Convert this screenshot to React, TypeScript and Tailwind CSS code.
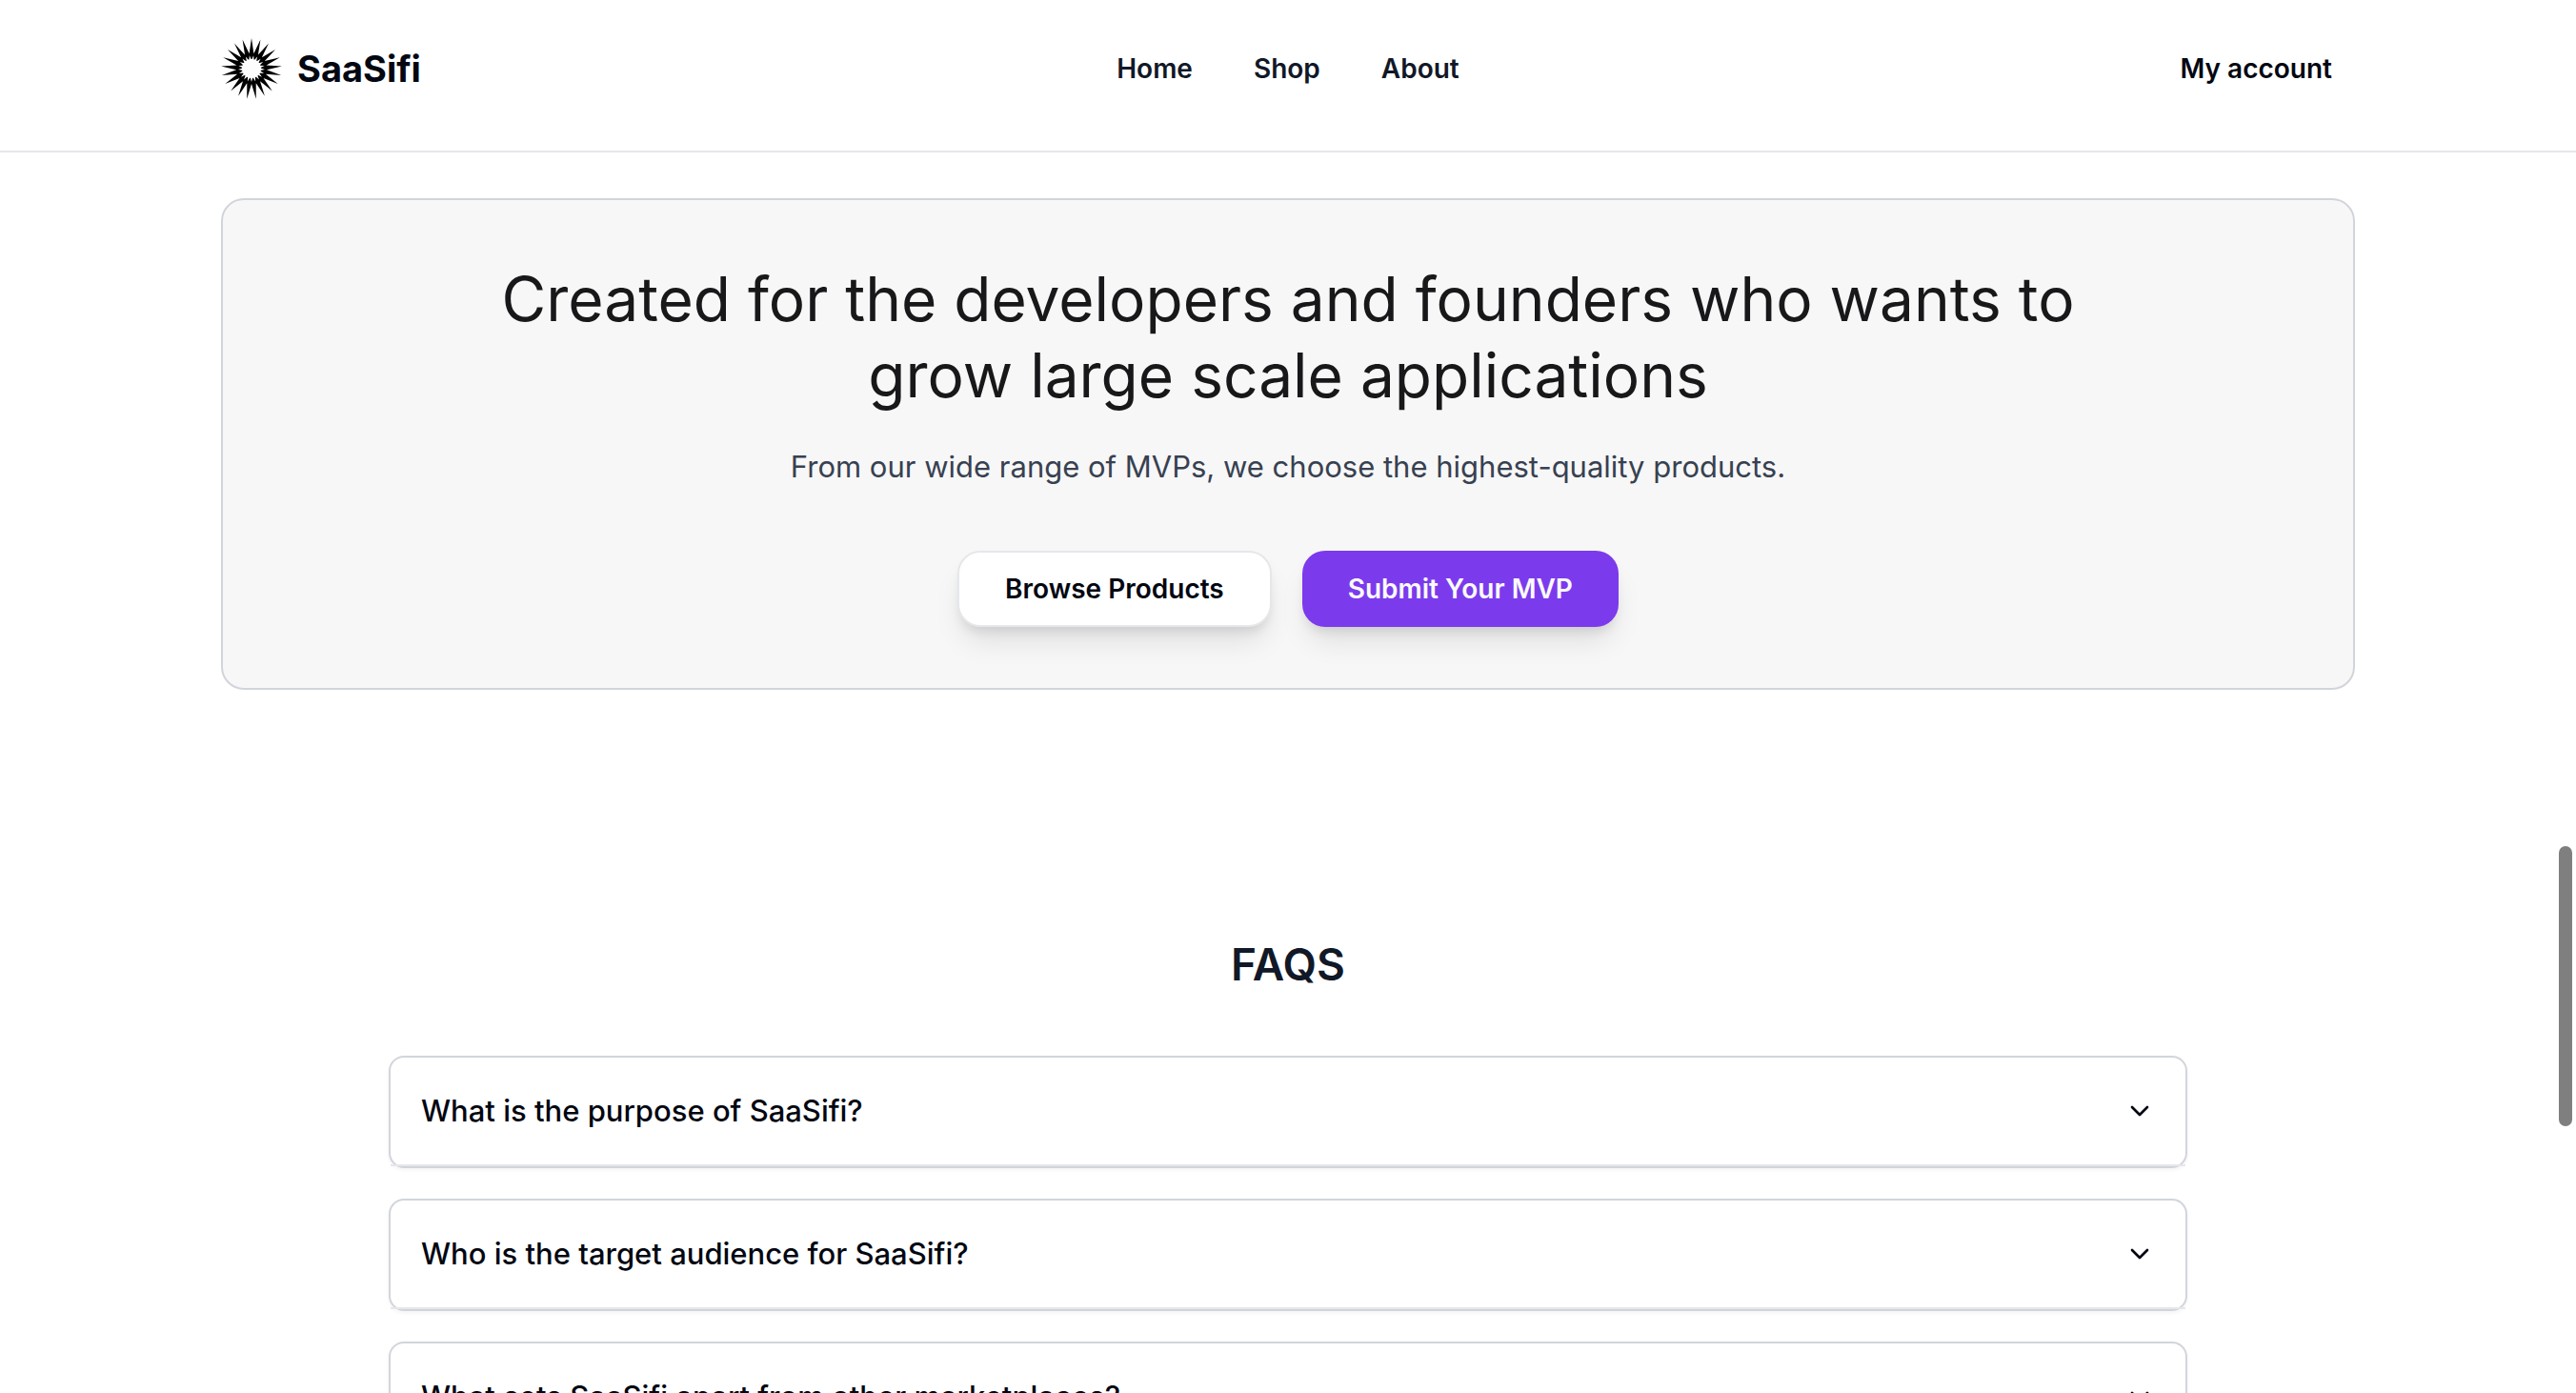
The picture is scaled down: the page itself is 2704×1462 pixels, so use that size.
import { ChevronDown } from "lucide-react";

const navLinks = [
  { label: "Home", href: "#home" },
  { label: "Shop", href: "#shop" },
  { label: "About", href: "#about" },
];

const faqs = [
  "What is the purpose of SaaSifi?",
  "Who is the target audience for SaaSifi?",
  "What sets SaaSifi apart from other marketplaces?",
];

const SPIKES = 21;

// star polygon around the middle of the 64x64 logo, first spike straight up
function star(tip: number, valley: number) {
  const points: string[] = [];
  for (let i = 0; i < SPIKES * 2; i++) {
    const angle = (i / SPIKES) * Math.PI - Math.PI / 2;
    const r = i % 2 === 0 ? tip : valley;
    points.push(
      `${(32 + r * Math.cos(angle)).toFixed(2)},${(32 + r * Math.sin(angle)).toFixed(2)}`
    );
  }
  return points.join(" ");
}

function Logo() {
  return (
    <svg viewBox="0 0 64 64" className="size-16" aria-hidden="true">
      <polygon points={star(32, 16)} fill="#000" />
      <polygon points={star(9, 14)} fill="#fff" />
      <circle cx="32" cy="32" r="10" fill="#fdfdfd" />
    </svg>
  );
}

function Header() {
  return (
    <header className="border-b-2 border-[#e5e7eb]">
      <div className="mx-auto grid max-w-[2240px] grid-cols-3 items-center pt-10 pb-[54px]">
        <a href="#home" className="flex items-center gap-4 justify-self-start">
          <Logo />
          <span className="text-[38px] leading-none font-bold">SaaSifi</span>
        </a>
        <nav className="flex gap-16 justify-self-center text-[28px] font-semibold text-[#111827]">
          {navLinks.map((link) => (
            <a key={link.label} href={link.href}>
              {link.label}
            </a>
          ))}
        </nav>
        <a href="#account" className="justify-self-end px-6 text-[28px] font-semibold">
          My account
        </a>
      </div>
    </header>
  );
}

function Hero() {
  return (
    <section className="mx-auto mt-12 max-w-[2240px] rounded-3xl border-2 border-[#d1d5db] bg-[#f7f7f7] px-16 pt-16 pb-16 text-center">
      <h1 className="mx-auto max-w-[1700px] text-[64px] leading-[80px] text-[#18181b]">
        Created for the developers and founders who wants to grow large scale applications
      </h1>
      <p className="mt-8 text-[31px] leading-[48px] text-[#374151]">
        From our wide range of MVPs, we choose the highest-quality products.
      </p>
      <div className="mt-16 flex justify-center gap-8 text-[28px] font-semibold">
        <button className="h-20 rounded-3xl border-2 border-[#e5e7eb] bg-white px-12 shadow-[0_20px_30px_-6px_rgba(0,0,0,0.1),0_8px_12px_-4px_rgba(0,0,0,0.1)]">
          Browse Products
        </button>
        <button className="h-20 rounded-3xl bg-[#7c3aed] px-12 text-[#f9fafb] shadow-[0_20px_30px_-6px_rgba(0,0,0,0.1),0_8px_12px_-4px_rgba(0,0,0,0.1)]">
          Submit Your MVP
        </button>
      </div>
    </section>
  );
}

function Faqs() {
  return (
    <section className="mx-auto mt-64 max-w-[1888px]">
      <h2 className="text-center text-[46px] leading-[64px] font-semibold text-[#111827]">
        FAQS
      </h2>
      <div className="mt-16 flex flex-col gap-8">
        {faqs.map((question) => (
          <div
            key={question}
            className="rounded-2xl border-2 border-[#d1d5db] shadow-[0_2px_4px_0_rgba(0,0,0,0.05)]"
          >
            <h3 className="border-b-2 border-[#e5e7eb]">
              <button
                aria-expanded="false"
                className="flex h-28 w-full items-center justify-between px-8 text-left text-[31px] font-medium"
              >
                {question}
                <ChevronDown className="size-8 shrink-0" aria-hidden="true" />
              </button>
            </h3>
          </div>
        ))}
      </div>
    </section>
  );
}

function App() {
  return (
    <div className="relative h-screen overflow-hidden bg-white font-[Inter,sans-serif] text-[#030712]">
      <Header />
      <main>
        <Hero />
        <Faqs />
      </main>
      {/* scroll thumb */}
      <div className="absolute top-[888px] right-1 h-[294px] w-3.5 rounded-full bg-[#7f7f7f]" />
    </div>
  );
}

export default App;
